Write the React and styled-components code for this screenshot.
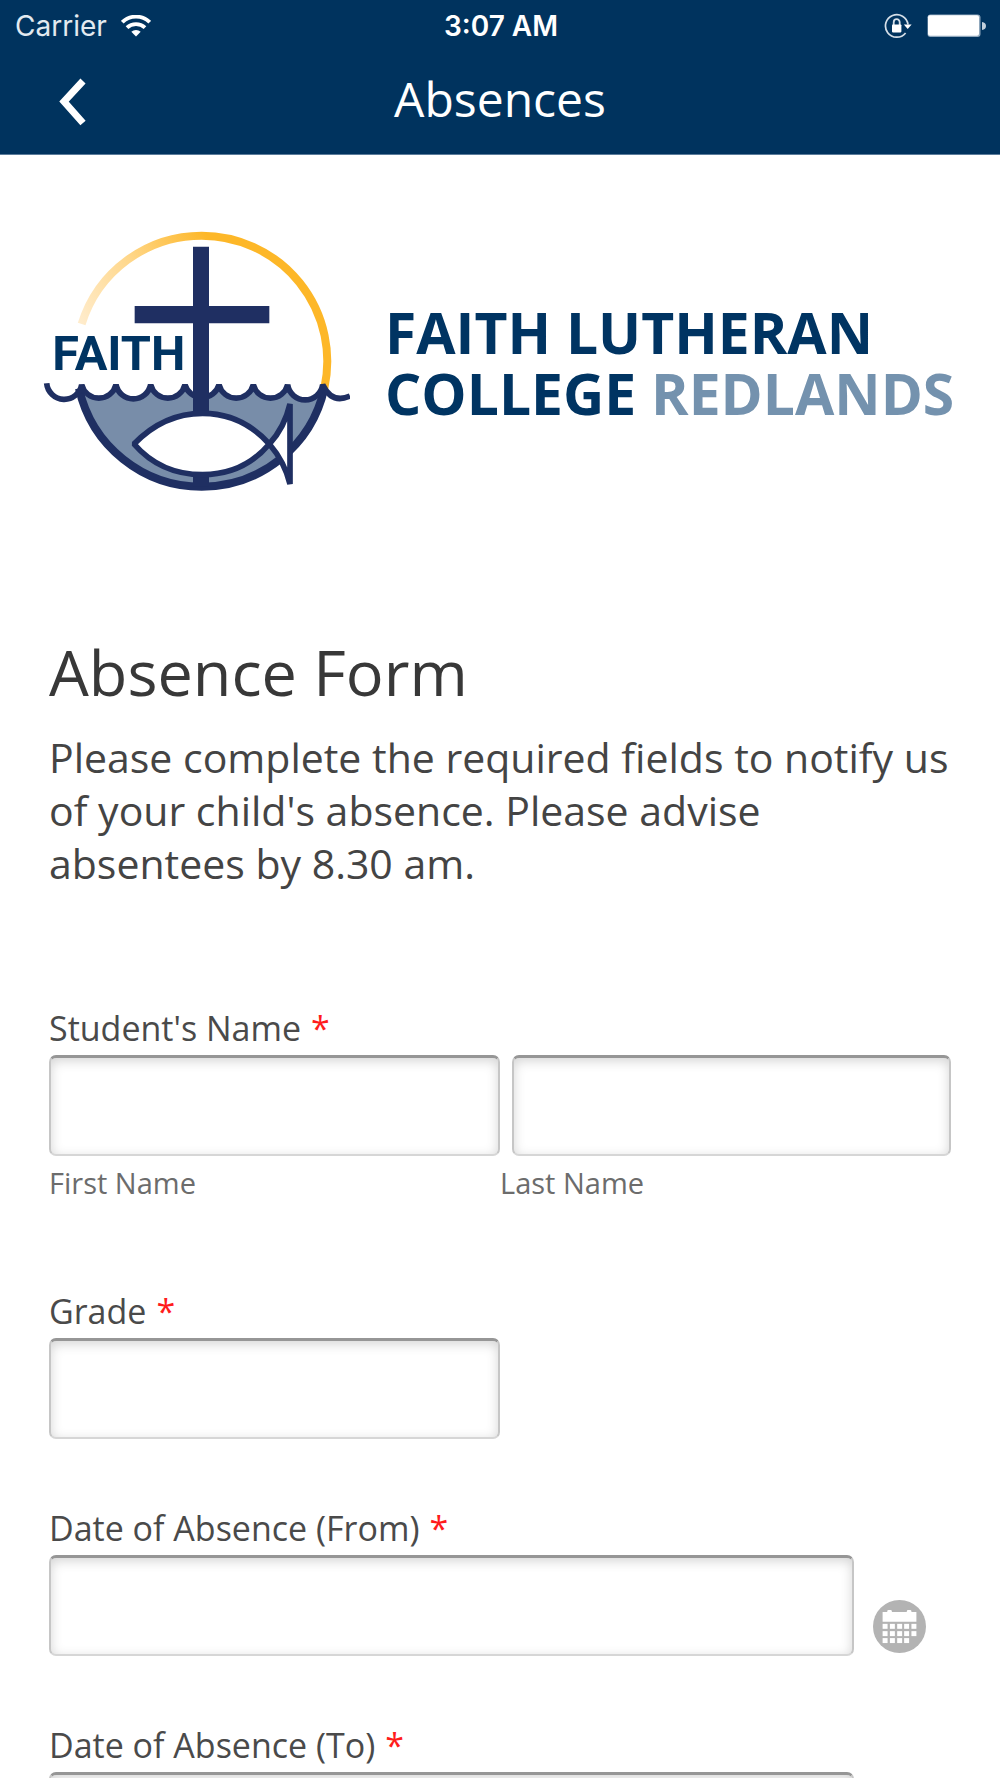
import * as React from "react";
import styled, { createGlobalStyle } from "styled-components";

const colors = {
  header: "#00335e",
  brand: "#003462",
  brandLight: "#7492ae",
  navy: "#1f2f62",
  water: "#788da9",
  heading: "#383838",
  text: "#444",
  label: "#4a4a4a",
  hint: "#6c6c6c",
  required: "#ff1c1c",
  icon: "#b3b3b3",
};

const GlobalStyle = createGlobalStyle`
  * {
    box-sizing: border-box;
  }

  body {
    margin: 0;
    background: #fff;
    font-family: "Open Sans", "Noto Sans", sans-serif;
  }
`;

const Screen = styled.div`
  display: flex;
  flex-direction: column;
  height: 100vh;
`;

const Header = styled.header`
  flex: none;
  background: ${colors.header};
  border-bottom: 1px solid #5b7c9b;
  color: #fff;
`;

const StatusBar = styled.div`
  display: grid;
  grid-template-columns: 1fr auto 1fr;
  align-items: center;
  height: 51px;
  padding: 0 13px 0 15px;
  font-family: Inter, sans-serif;
  font-size: 28px;
`;

const StatusGroup = styled.div`
  display: flex;
  align-items: center;
  justify-content: ${(props) => (props.$end ? "flex-end" : "flex-start")};
  gap: ${(props) => (props.$end ? 15 : 14)}px;
  color: #e3eaf0;
`;

const Time = styled.time`
  font-weight: 600;
`;

const NavBar = styled.div`
  display: grid;
  grid-template-columns: 100px 1fr 100px;
  align-items: center;
  height: 103px;
  padding-bottom: 8px;
`;

const BackButton = styled.button`
  display: flex;
  padding: 6px 0 0 58px;
  border: 0;
  background: none;
  color: inherit;
`;

const NavTitle = styled.div`
  font-size: 48px;
  line-height: 60px;
  text-align: center;
`;

const Main = styled.main`
  flex: 1;
  min-height: 0;
  overflow-y: auto;
  scrollbar-width: none;
`;

const Banner = styled.div`
  display: flex;
  align-items: center;
  gap: 35px;
  padding: 75px 40px 0;
`;

const Emblem = styled.svg`
  flex: none;
`;

const SchoolName = styled.div`
  color: ${colors.brand};
  font-size: 57px;
  font-weight: 700;
  line-height: 61px;
  white-space: nowrap;

  span {
    color: ${colors.brandLight};
  }
`;

const Content = styled.div`
  padding: 137px 49px 80px;
`;

const Title = styled.h1`
  margin: 0 0 19px;
  color: ${colors.heading};
  font-size: 63px;
  font-weight: 400;
  line-height: 80px;
`;

const Intro = styled.p`
  margin: 0 0 116px;
  color: ${colors.text};
  font-size: 41px;
  line-height: 53px;
`;

const Form = styled.form`
  display: flex;
  flex-direction: column;
  gap: 67px;
`;

const Field = styled.fieldset`
  min-width: 0;
  margin: 0;
  padding: 0;
  border: 0;
`;

const Label = styled.label`
  display: block;
  margin-bottom: 5px;
  color: ${colors.label};
  font-size: 34px;
  line-height: 44px;
`;

const Required = styled.span`
  margin-left: 10px;
  color: ${colors.required};
`;

const Halves = styled.div`
  display: grid;
  grid-template-columns: 1fr 1fr;
`;

const Half = styled.div`
  padding-left: ${(props) => (props.$second ? 12 : 0)}px;
`;

const Input = styled.input`
  display: block;
  width: 100%;
  height: 101px;
  padding: 0 16px;
  border: 2px solid #c6c6c6;
  border-top: 3px solid #969696;
  border-bottom-color: #d6d6d6;
  border-radius: 7px;
  background: #fff;
  box-shadow: inset 0 3px 12px rgba(0, 0, 0, 0.17);
  color: ${colors.label};
  font: inherit;
  font-size: 34px;
`;

const Hint = styled.label`
  display: block;
  margin: 7px 0 19px;
  color: ${colors.hint};
  font-size: 29px;
  line-height: 40px;
`;

const DateRow = styled.div`
  display: grid;
  grid-template-columns: 1fr 53px;
  align-items: end;
  gap: 19px;
  padding-right: 25px;
`;

const CalendarButton = styled.button`
  display: flex;
  margin-bottom: 3px;
  padding: 0;
  border: 0;
  background: none;
`;

const dateFields = [
  { id: "date-from", label: "Date of Absence (From)" },
  { id: "date-to", label: "Date of Absence (To)" },
];

function WifiIcon() {
  return (
    <svg width="30" height="22" viewBox="0 0 30 22" fill="none" stroke="#fff">
      <path d="M1.3 7.2A19.5 19.5 0 0 1 28.7 7.2" strokeWidth="3.8" />
      <path d="M6 12.7A13 13 0 0 1 24 12.7" strokeWidth="3.8" />
      <path d="M15 21.5L10.3 16.8A7 7 0 0 1 19.7 16.8Z" fill="#fff" stroke="none" />
    </svg>
  );
}

function RotationLockIcon() {
  return (
    <svg width="28" height="26" viewBox="0 0 28 26" fill="none" stroke="#d5dfe8">
      <path d="M24 11.5A11.3 11.3 0 1 0 21.6 20" strokeWidth="1.7" />
      <path d="M19.8 11.4H27.6L23.7 16Z" fill="#fff" stroke="none" />
      <path d="M9.7 12V9.5A3 3.3 0 0 1 15.7 9.5V12" strokeWidth="1.8" />
      <rect x="8" y="11.4" width="9.4" height="8" rx="0.8" fill="#fff" stroke="none" />
    </svg>
  );
}

function BatteryIcon() {
  return (
    <svg width="60" height="24" viewBox="0 0 60 24">
      <rect x="0.5" y="0.5" width="53" height="22.5" rx="3" fill="#8fa7bc" />
      <rect x="1" y="1.2" width="51" height="20.6" rx="2" fill="#fff" />
      <path d="M55 8Q59 8.5 59 12T55 16Z" fill="#c3d0dc" />
    </svg>
  );
}

function BackIcon() {
  return (
    <svg width="30" height="48" viewBox="0 0 30 48" fill="none">
      <path d="M25 3L6 23.5L25 45" stroke="#fff" strokeWidth="7" />
    </svg>
  );
}

function CalendarIcon() {
  const cells = [];
  [72, 94, 115].forEach((y, row) => {
    [29, 51, 73, 94, 116].forEach((x, col) => {
      if (row < 2 || col < 4) {
        cells.push(<rect key={`${x}-${y}`} x={x} y={y} width="15" height="15" />);
      }
    });
  });

  return (
    <svg width="53" height="53" viewBox="0 0 160 160" fill="#fff">
      <circle cx="80" cy="80" r="80" fill={colors.icon} />
      <path d="M29 36H43V34Q43 30 47 30H53Q57 30 57 34V36H102V34Q102 30 106 30H112Q116 30 116 34V36H131V66H29Z" />
      {cells}
    </svg>
  );
}

function SchoolEmblem() {
  const crests = [155, 258, 362, 465, 567, 670, 773, 878];
  const waves = crests.map((x) => `A53 53 0 0 0 ${x} 494`).join("");
  const innerWaves = crests.slice(1).map((x) => `A53 53 0 0 0 ${x} 494`).join("");

  return (
    <Emblem width="310" height="265" viewBox="30 30 930 795" role="img" aria-label="Faith emblem">
      <defs>
        <linearGradient id="sun" gradientUnits="userSpaceOnUse" x1="140" y1="310" x2="540" y2="60">
          <stop offset="0" stopColor="#ffedcf" />
          <stop offset="0.5" stopColor="#ffd78a" />
          <stop offset="1" stopColor="#fdb728" />
        </linearGradient>
      </defs>
      <path
        d="M155 312A377 377 0 0 1 515 47A377 377 0 0 1 883 505"
        fill="none"
        stroke="url(#sun)"
        strokeWidth="24"
      />
      <path d={`M155 494${innerWaves}L879 520A377 377 0 0 1 151 520Z`} fill={colors.water} />
      <g fill="none" stroke={colors.navy}>
        <path d="M147 505A377 377 0 0 0 883 505" strokeWidth="24" />
        <path
          d={`M50 490${waves}Q906 553 960 528`}
          strokeWidth="17"
          strokeLinejoin="bevel"
        />
      </g>
      <path
        d="M489 80H537V258H718V310H537V590H489V310H314V258H489ZM489 755H537V800H489Z"
        fill={colors.navy}
      />
      <path
        d="M312 672C372 610 445 580 518 580C600 580 665 613 718 672C755 715 770 752 780 792V552C770 595 755 632 718 672C665 735 600 764 518 764C435 764 365 733 312 672Z"
        fill="#fff"
        stroke={colors.navy}
        strokeWidth="17"
        strokeLinejoin="bevel"
      />
      <text
        x="67"
        y="450"
        fill={colors.brand}
        fontFamily="Roboto, sans-serif"
        fontSize="146"
        fontWeight="700"
      >
        FAITH
      </text>
    </Emblem>
  );
}

function App() {
  return (
    <>
      <GlobalStyle />
      <Screen>
        <Header>
          <StatusBar>
            <StatusGroup>
              Carrier
              <WifiIcon />
            </StatusGroup>
            <Time>3:07 AM</Time>
            <StatusGroup $end>
              <RotationLockIcon />
              <BatteryIcon />
            </StatusGroup>
          </StatusBar>
          <NavBar>
            <BackButton type="button" aria-label="Back">
              <BackIcon />
            </BackButton>
            <NavTitle>Absences</NavTitle>
          </NavBar>
        </Header>
        <Main>
          <Banner>
            <SchoolEmblem />
            <SchoolName>
              FAITH LUTHERAN
              <br />
              COLLEGE <span>REDLANDS</span>
            </SchoolName>
          </Banner>
          <Content>
            <Title>Absence Form</Title>
            <Intro>
              Please complete the required fields to notify us of your child's absence. Please
              advise absentees by 8.30 am.
            </Intro>
            <Form>
              <Field>
                <Label htmlFor="first-name">
                  Student's Name<Required>*</Required>
                </Label>
                <Halves>
                  <Half>
                    <Input id="first-name" type="text" />
                  </Half>
                  <Half $second>
                    <Input id="last-name" type="text" />
                  </Half>
                  <Hint htmlFor="first-name">First Name</Hint>
                  <Hint htmlFor="last-name">Last Name</Hint>
                </Halves>
              </Field>
              <Field>
                <Label htmlFor="grade">
                  Grade<Required>*</Required>
                </Label>
                <Halves>
                  <Input id="grade" type="text" />
                </Halves>
              </Field>
              {dateFields.map((field) => (
                <Field key={field.id}>
                  <Label htmlFor={field.id}>
                    {field.label}
                    <Required>*</Required>
                  </Label>
                  <DateRow>
                    <Input id={field.id} type="text" />
                    <CalendarButton type="button" aria-label={`Pick ${field.label}`}>
                      <CalendarIcon />
                    </CalendarButton>
                  </DateRow>
                </Field>
              ))}
            </Form>
          </Content>
        </Main>
      </Screen>
    </>
  );
}

export default App;
